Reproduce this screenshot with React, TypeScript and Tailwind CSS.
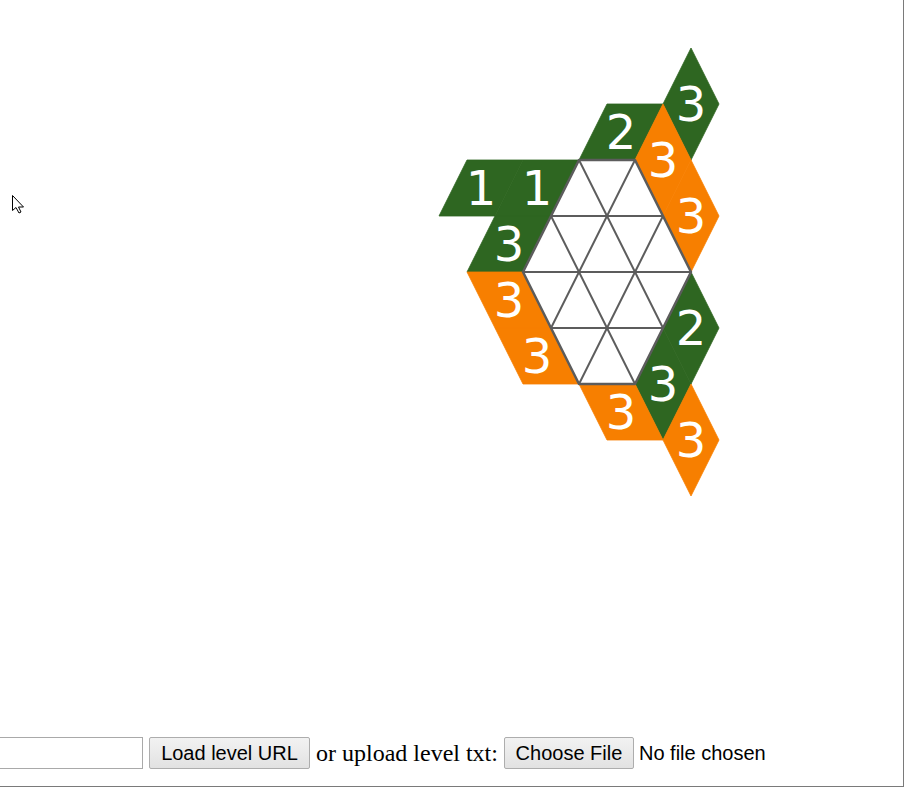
import React from 'react';

const GREEN = '#2e6621';
const ORANGE = '#f77f00';
const LINE = '#5c5c5c';

type Tile = { fill: string; pts: number[][]; label: string; c: [number, number] };

const tiles: Tile[] = [
  { fill: GREEN, pts: [[467, 160], [523, 160], [495, 216], [439, 216]], label: '1', c: [481, 188] },
  { fill: GREEN, pts: [[523, 160], [579, 160], [551, 216], [495, 216]], label: '1', c: [537, 188] },
  { fill: GREEN, pts: [[495, 216], [551, 216], [523, 272], [467, 272]], label: '3', c: [509, 244] },
  { fill: GREEN, pts: [[607, 104], [663, 104], [635, 160], [579, 160]], label: '2', c: [621, 132] },
  { fill: GREEN, pts: [[691, 48], [719, 104], [691, 160], [663, 104]], label: '3', c: [691, 104] },
  { fill: ORANGE, pts: [[663, 104], [691, 160], [663, 216], [635, 160]], label: '3', c: [663, 160] },
  { fill: ORANGE, pts: [[691, 160], [719, 216], [691, 272], [663, 216]], label: '3', c: [691, 216] },
  { fill: ORANGE, pts: [[467, 272], [523, 272], [551, 328], [495, 328]], label: '3', c: [509, 300] },
  { fill: ORANGE, pts: [[495, 328], [551, 328], [579, 384], [523, 384]], label: '3', c: [537, 356] },
  { fill: GREEN, pts: [[691, 272], [719, 328], [691, 384], [663, 328]], label: '2', c: [691, 328] },
  { fill: GREEN, pts: [[663, 328], [691, 384], [663, 440], [635, 384]], label: '3', c: [663, 384] },
  { fill: ORANGE, pts: [[579, 384], [635, 384], [663, 440], [607, 440]], label: '3', c: [621, 412] },
  { fill: ORANGE, pts: [[691, 384], [719, 440], [691, 496], [663, 440]], label: '3', c: [691, 440] },
];

// inner lines of the triangle grid
const innerLines = [
  [551, 216, 663, 216],
  [523, 272, 691, 272],
  [551, 328, 663, 328],
  [635, 160, 551, 328],
  [663, 216, 579, 384],
  [579, 160, 663, 328],
  [551, 216, 635, 384],
];

const hexagon = '579,160 635,160 691,272 635,384 579,384 523,272';

const Board: React.FC = () => (
  <svg width={904} height={737} className="block shrink-0">
    {tiles.map((t, i) => (
      <polygon
        key={i}
        points={t.pts.map((p) => p.join(',')).join(' ')}
        fill={t.fill}
        stroke={t.fill}
        strokeWidth={0.8}
        strokeLinejoin="miter"
      />
    ))}
    <polygon points={hexagon} fill="#ffffff" />
    {innerLines.map((l, i) => (
      <line key={i} x1={l[0]} y1={l[1]} x2={l[2]} y2={l[3]} stroke={LINE} strokeWidth={2} />
    ))}
    <polygon points={hexagon} fill="none" stroke={LINE} strokeWidth={2.5} strokeLinejoin="round" />
    {tiles.map((t, i) => (
      <text
        key={i}
        x={t.c[0]}
        y={t.c[1]}
        fill="#ffffff"
        fontSize={48}
        textAnchor="middle"
        dominantBaseline="central"
        style={{ fontFamily: '"DejaVu Sans", sans-serif' }}
      >
        {t.label}
      </text>
    ))}
    {/* mouse pointer */}
    <polygon
      points="12.5,195.5 12.5,210.5 16,207.5 19,213 21,212 18.5,207 23.5,207"
      fill="#ffffff"
      stroke="#000000"
      strokeWidth={1}
      strokeLinejoin="round"
    />
  </svg>
);

export default function App() {
  return (
    <div className="w-[904px] h-[787px] overflow-hidden border-r border-b border-[#7a7a7a] bg-white flex flex-col">
      <Board />
      <div className="flex items-center h-[32px] ml-[-61px] font-['Liberation_Sans',Arial,sans-serif] text-[20px] text-black">
        <input
          type="text"
          className="w-[204px] h-[32px] border border-[#a9a9a9] bg-white px-1 outline-none"
        />
        <button className="ml-[6px] h-[32px] w-[161px] border border-[#adadad] rounded-[2px] bg-linear-to-b from-[#f2f2f2] to-[#e2e2e2] leading-none">
          Load level URL
        </button>
        <span className="ml-[6px] text-[24px] font-['Liberation_Serif','Times_New_Roman',serif] leading-none">
          or upload level txt:
        </span>
        <button className="ml-[6px] h-[32px] w-[130px] border border-[#adadad] rounded-[2px] bg-linear-to-b from-[#f2f2f2] to-[#e2e2e2] leading-none">
          Choose File
        </button>
        <span className="ml-[5px] leading-none">No file chosen</span>
      </div>
    </div>
  );
}
